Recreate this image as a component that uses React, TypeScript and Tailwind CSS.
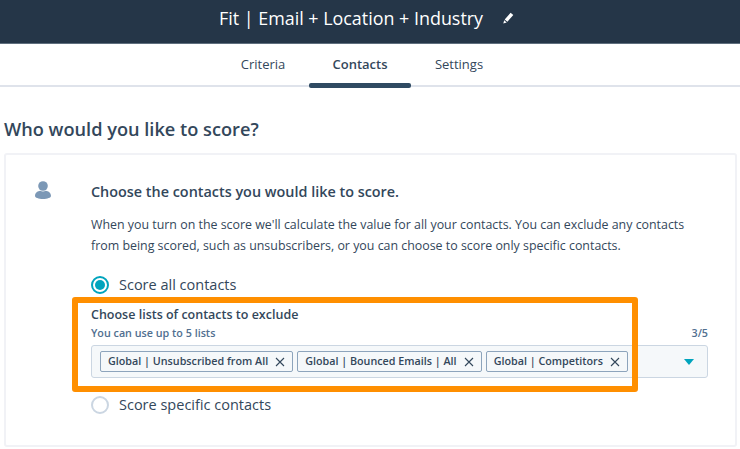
import React from 'react';

const chips = ['Global | Unsubscribed from All', 'Global | Bounced Emails | All', 'Global | Competitors'];

const Close = () => (
  <svg width="10" height="10" viewBox="0 0 10 10" className="shrink-0" fill="none" stroke="#33475b" strokeWidth="1.1">
    <path d="M1 1l8 8M9 1l-8 8" />
  </svg>
);

export default function App() {
  return (
    <div className="w-[740px] h-[449px] overflow-hidden bg-white text-[#33475b] font-['Open_Sans',sans-serif]">
      {/* Header */}
      <div className="h-[44px] bg-[#253648] border-b border-b-[#5f6f7e] flex items-center justify-center gap-[19px] pb-[7px] pr-[7px]">
        <span className="text-[17.9px] text-white">Fit | Email + Location + Industry</span>
        <svg width="12" height="12" viewBox="0 0 12 12" fill="#fff">
          <path d="M8.6.7l2.7 2.2-5.9 6.9-2.7-2.2zM2.2 8.3l2.5 2.1-3.4 1.2z" />
        </svg>
      </div>

      {/* Tabs */}
      <div className="h-[43px] border-b-2 border-b-[#dfe3eb] flex justify-center pr-[16px]">
        <div className="flex">
          <div className="w-[92px] flex items-center justify-center text-[13px]">Criteria</div>
          <div className="relative w-[102px] flex items-center justify-center text-[13px] font-semibold">
            Contacts
            <div className="absolute left-0 right-0 bottom-[-3px] h-[5px] rounded-[2px] bg-[#2f4a62]" />
          </div>
          <div className="w-[96px] flex items-center justify-center text-[13px]">Settings</div>
        </div>
      </div>

      {/* Body */}
      <div className="px-[4px] pt-[30px]">
        <h2 className="text-[18.2px] leading-[24px] font-semibold text-[#33475b]">Who would you like to score?</h2>

        <div className="mt-[12px] w-[733px] h-[294px] border-2 border-[#f1f2f6] rounded-[3px] flex">
          <div className="w-[85px] pl-[29px] pt-[26px] shrink-0">
            <svg width="16" height="18" viewBox="0 0 16 18" fill="#7c98b6">
              <circle cx="8" cy="5" r="4.8" />
              <path d="M0 15c0-3.6 3-5 5.2-5.3 1.6 1 4 1 5.6 0C13 10 16 11.4 16 15c0 1.6-3.6 3-8 3s-8-1.4-8-3z" />
            </svg>
          </div>

          <div className="flex-1 min-w-0 pr-[27px]">
            <h3 className="mt-[27px] text-[14.4px] leading-[20px] font-semibold">Choose the contacts you would like to score.</h3>
            <p className="mt-[12px] text-[12.4px] leading-[21px] w-[610px]">
              When you turn on the score we'll calculate the value for all your contacts. You can exclude any contacts from being scored, such as unsubscribers, or you can choose to score only specific contacts.
            </p>

            <div className="mt-[19px] flex items-center gap-[10px] h-[20px]">
              <div className="w-[18px] h-[18px] rounded-full border-2 border-[#00a4bd] flex items-center justify-center">
                <div className="w-[10px] h-[10px] rounded-full bg-[#00a4bd]" />
              </div>
              <span className="text-[14.5px]">Score all contacts</span>
            </div>

            <div className="relative">
              <div className="mt-[11px] text-[12.5px] leading-[18px] font-semibold">Choose lists of contacts to exclude</div>
              <div className="mt-[2px] flex justify-between text-[10.75px] leading-[15px] font-semibold text-[#516f90]">
                <span>You can use up to 5 lists</span>
                <span>3/5</span>
              </div>

              <div className="mt-[4px] h-[33px] bg-[#f5f8fa] border border-[#cbd6e2] rounded-[3px] pl-[8px] pr-[13px] flex items-center gap-[4px]">
                {chips.map((c, i) => (
                  <div key={i} className="h-[21px] px-[7px] bg-[#f5f8fa] border border-[#8da4bc] rounded-[2px] flex items-center gap-[7px] text-[10.75px] font-semibold whitespace-nowrap">
                    {c}
                    <Close />
                  </div>
                ))}
                <div className="ml-auto w-0 h-0 border-l-[5px] border-r-[5px] border-t-[6px] border-l-transparent border-r-transparent border-t-[#00a4bd]" />
              </div>

              {/* Orange highlight drawn over the form */}
              <div className="absolute left-[-19px] top-[-9px] w-[566px] h-[95px] border-[6px] border-[#ff8f00] rounded-[3px] pointer-events-none" />
            </div>

            <div className="mt-[17px] flex items-center gap-[10px] h-[20px]">
              <div className="w-[18px] h-[18px] rounded-full border-2 border-[#cbd6e2] bg-white" />
              <span className="text-[14.5px]">Score specific contacts</span>
            </div>
          </div>
        </div>
      </div>
    </div>
  );
}
